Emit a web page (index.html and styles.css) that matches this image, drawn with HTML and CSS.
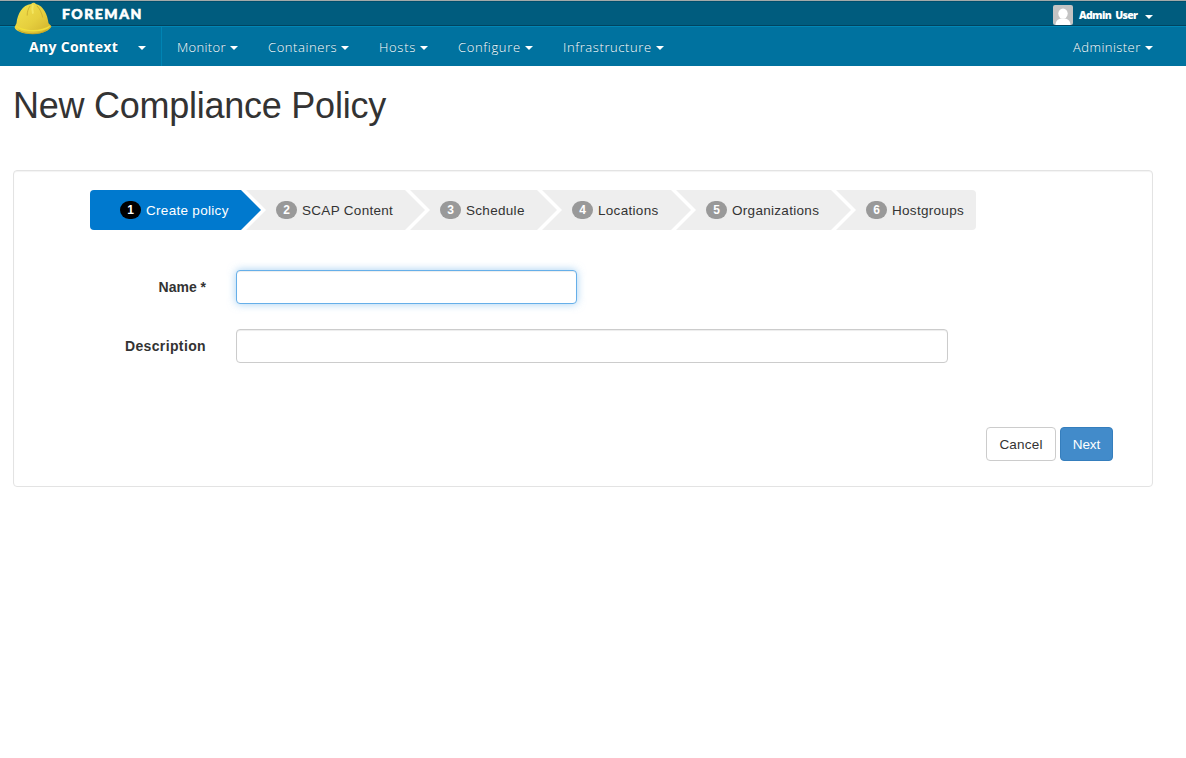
FILE: index.html
```html
<!DOCTYPE html>
<html lang="en">
<head>
<meta charset="utf-8">
<title>New Compliance Policy</title>
<link rel="stylesheet" href="styles.css">
</head>
<body>
<header>
  <div class="topbar">
    <svg class="helmet" width="38" height="33" viewBox="0 0 38 34">
      <defs><linearGradient id="shell" x1="0" y1="0" x2="1" y2="1"><stop offset="0" stop-color="#f3e34f"/><stop offset=".55" stop-color="#e6cf3e"/><stop offset="1" stop-color="#cfae2b"/></linearGradient></defs>
      <path d="M2 22C3 12 8 3 17 2c2-2 4-1 5 0 8 2 12 11 13 20l3 3c-1 4-9 8-19 8C8 33 1 30 0 26z" fill="url(#shell)"/>
      <path d="M1 24c8 6 26 7 36 0-2 8-31 9-36 0z" fill="#f2df3a"/>
      <path d="M4 29c8 5 22 5 29 0" fill="none" stroke="#c2a424" stroke-width="1"/>
      <path d="M16 4c-2 3-3 6-3 10M23 4c3 3 5 7 6 12" fill="none" stroke="#cdb032" stroke-width="1"/>
      <path d="M19 3c-1 3-1 6 0 9" fill="none" stroke="#f3e560" stroke-width="2"/>
    </svg>
    <span class="brand">FOREMAN</span>
    <div class="user">
      <svg width="20" height="20" viewBox="0 0 20 20"><rect width="20" height="20" rx="2" fill="#c3c3c3"/><ellipse cx="10" cy="8.600" rx="4.700" ry="5.200" fill="#fff"/><path d="M2.500 20c.2-4.400 2.300-6 5.500-6.600h4c3.200.6 5.300 2.200 5.500 6.600z" fill="#fff"/></svg>
      <span class="user-name">Admin User</span><i class="caret"></i>
    </div>
  </div>
  <nav class="navbar">
    <a class="context"><span>Any Context</span><i class="caret"></i></a>
    <a class="item"><span class="monitor">Monitor</span><i class="caret"></i></a>
    <a class="item"><span class="containers">Containers</span><i class="caret"></i></a>
    <a class="item"><span class="hosts">Hosts</span><i class="caret"></i></a>
    <a class="item"><span class="configure">Configure</span><i class="caret"></i></a>
    <a class="item"><span class="infrastructure">Infrastructure</span><i class="caret"></i></a>
    <a class="item administer"><span>Administer</span><i class="caret"></i></a>
  </nav>
</header>
<main>
  <h1>New Compliance Policy</h1>
  <form class="well">
    <ol class="wizard">
      <li class="step create active"><b>1</b><span>Create policy</span></li>
      <li class="step scap"><b>2</b><span>SCAP Content</span></li>
      <li class="step schedule"><b>3</b><span>Schedule</span></li>
      <li class="step locations"><b>4</b><span>Locations</span></li>
      <li class="step organizations"><b>5</b><span>Organizations</span></li>
      <li class="step hostgroups"><b>6</b><span>Hostgroups</span></li>
    </ol>
    <div class="row"><label for="name">Name *</label><input class="name focused" id="name" type="text"></div>
    <div class="row"><label class="wide" for="description">Description</label><input class="description" id="description" type="text"></div>
    <div class="actions"><button class="cancel" type="button">Cancel</button><button class="next" type="button">Next</button></div>
  </form>
</main>
</body>
</html>
```
FILE: styles.css
```css
* { box-sizing: border-box; }
body { margin: 0; background: #fff; color: #333; font: 14px/20px "Liberation Sans", Arial, sans-serif; }
.topbar { position: relative; display: flex; height: 26px; padding: 1px 33px 0 62px; background: #005c7e; border-top: 1px solid #a3aaa9; border-bottom: 1px solid #004460; box-shadow: inset 0 1px #004f6d; }
.helmet { position: absolute; left: 14px; top: 1px; z-index: 2; }
.brand { color: #fff; font: 900 14px/23px Lato, sans-serif; letter-spacing: 1.5px; -webkit-text-stroke: .6px #fff; }
.user { display: flex; margin-left: auto; padding-top: 3px; color: #fff; }
.user-name { width: 62px; margin-left: 6px; font: 800 10.5px/20px "Open Sans", sans-serif; letter-spacing: -.65px; word-spacing: 2px; white-space: nowrap; }
.caret { width: 0; height: 0; border: 4px solid transparent; border-top-color: #fff; border-bottom: 0; }
.user .caret { margin: 10px 0 0 4px; }
.navbar { display: flex; height: 40px; background: #00729f; border-top: 1px solid #0086b5; color: #fff; font: 400 13px/41px "Open Sans", sans-serif; text-shadow: 0 -1px 0 rgba(0,50,75,.45); }
.navbar a { display: flex; align-items: center; white-space: nowrap; }
.navbar .item span { padding-top: 1px; }
.navbar .caret { margin-top: 3px; }
.context { width: 162px; padding: 0 15px 0 29px; justify-content: space-between; border-right: 1px solid #0084b3; font-weight: 700; font-size: 14px; letter-spacing: .3px; }
.item { padding: 0 15px; letter-spacing: .35px; }
.item span { font-weight: 350; }
.monitor { width: 53px; letter-spacing: .35px; }
.containers { width: 73px; letter-spacing: .57px; }
.hosts { width: 41px; letter-spacing: .7px; }
.configure { width: 67px; letter-spacing: .65px; }
.infrastructure { width: 93px; letter-spacing: .6px; }
.administer { margin-left: auto; padding-right: 33px; }
.administer span { width: 72px; letter-spacing: .45px; }
main { padding: 20px 33px 0 13px; }
h1 { margin: 0; font-size: 36px; line-height: 40px; font-weight: 400; letter-spacing: -.25px; }
.well { height: 317px; margin: 44px 0 0; padding: 19px 39px 0 76px; border: 1px solid #e3e3e3; border-radius: 4px; box-shadow: inset 0 1px 1px rgba(0,0,0,.05); }
.wizard { display: flex; width: 886px; height: 40px; margin: 0 0 40px; padding: 0; list-style: none; border-radius: 4px; overflow: hidden; }
.step { position: relative; display: flex; align-items: center; padding-left: 35px; background: #eee; white-space: nowrap; }
.step span { padding-top: 1px; font-size: 13.5px; letter-spacing: .3px; }
.step::before, .step::after { content: ""; position: absolute; z-index: 1; top: 0; left: 100%; width: 20px; height: 40px; background: #eee; clip-path: polygon(0 0, 100% 50%, 0 100%); }
.step::before { width: 25px; background: #fff; clip-path: polygon(0 0, 5px 0, 100% 50%, 5px 100%, 0 100%); }
.step:last-child::before, .step:last-child::after { display: none; }
.step b { width: 21px; height: 18px; margin-right: 5px; border-radius: 9px; background: #999; color: #fff; font-size: 12px; line-height: 18px; text-align: center; }
.step.active { background: #0079ce; color: #fff; }
.step.active::after { background: #0079ce; }
.step.active b { background: #000; }
.create { width: 151px; padding-left: 30px; }
.scap { width: 164px; }
.schedule { width: 132px; }
.locations { width: 134px; }
.organizations { width: 160px; }
.hostgroups { width: 145px; }
.row { display: flex; align-items: center; height: 34px; margin-bottom: 25px; }
label { width: 116px; margin-right: 30px; text-align: right; font-weight: 700; white-space: nowrap; }
.wide { letter-spacing: .37px; }
input { height: 34px; border: 1px solid #ccc; border-radius: 4px; outline: 0; background: #fff; box-shadow: inset 0 1px 1px rgba(0,0,0,.075); }
.name { width: 341px; }
.description { width: 712px; }
.focused { border-color: #66afe9; box-shadow: inset 0 1px 1px rgba(0,0,0,.075), 0 0 8px rgba(102,175,233,.6); }
.actions { display: flex; justify-content: flex-end; gap: 4px; margin-top: 64px; }
button { height: 34px; padding: 1px 0 0; border-radius: 4px; font: 13.5px/20px "Liberation Sans", Arial, sans-serif; letter-spacing: .2px; }
.cancel { width: 70px; border: 1px solid #ccc; background: #fff; color: #333; }
.next { width: 53px; border: 1px solid #357ebd; background: #428bca; color: #fff; letter-spacing: -.1px; }
```
